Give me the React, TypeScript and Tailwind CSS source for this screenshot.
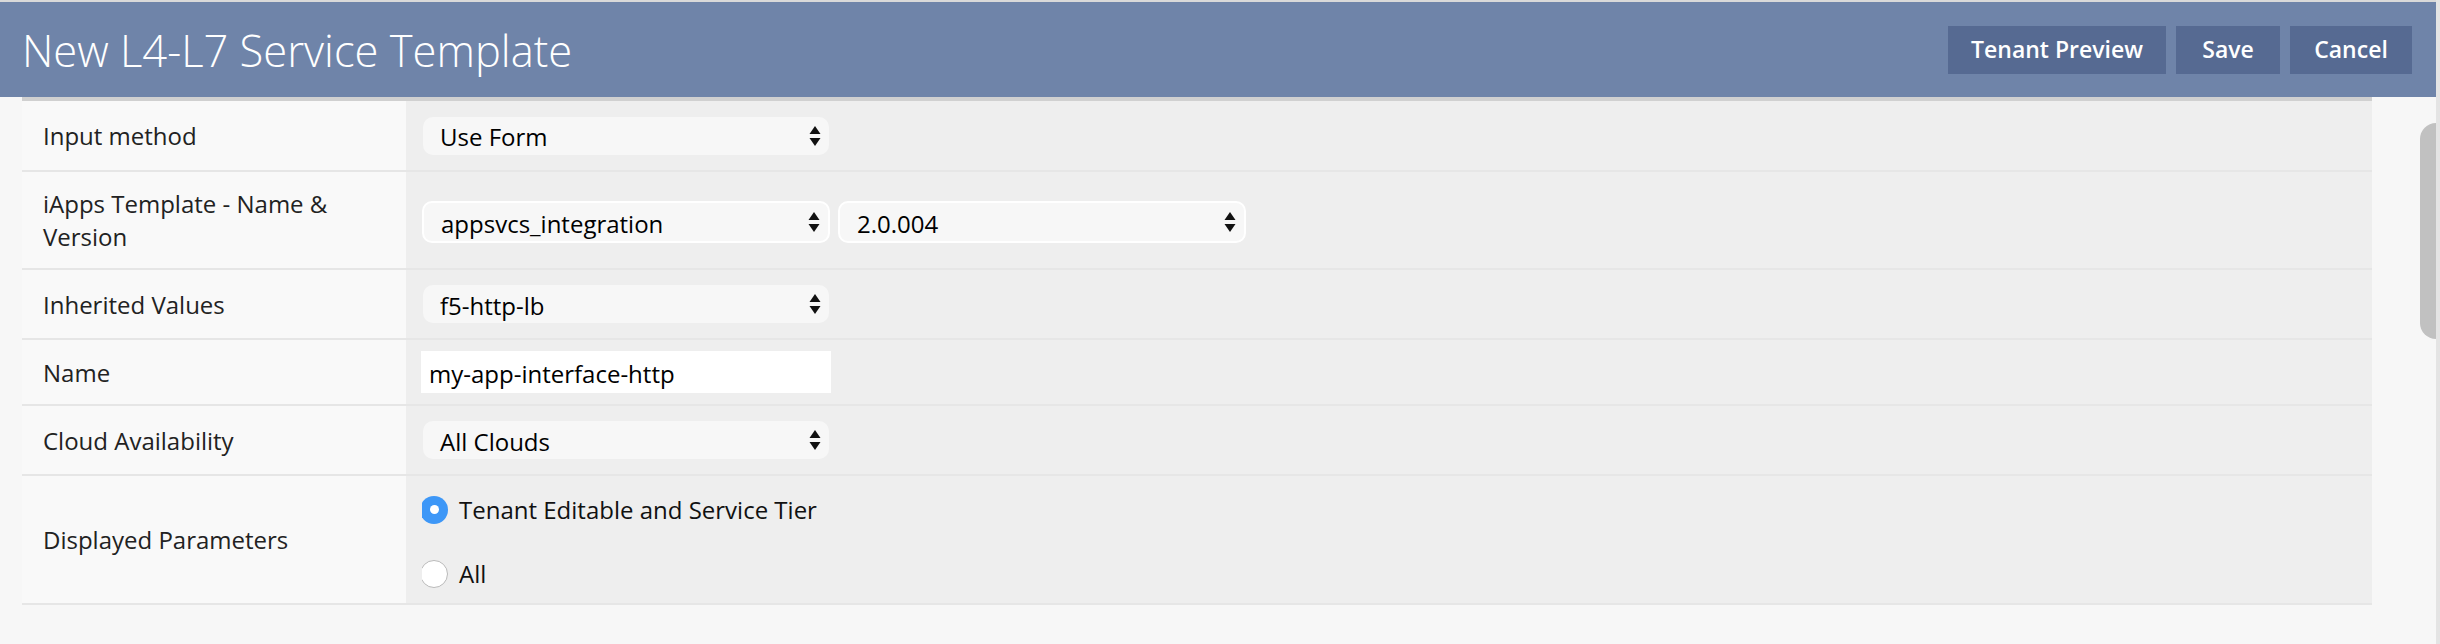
function Arrows() {
  return (
    <svg width="12" height="20" viewBox="0 0 12 20" className="shrink-0">
      <polygon points="6,0 11.5,8 0.5,8" fill="#111" />
      <polygon points="0.5,12 11.5,12 6,20" fill="#111" />
    </svg>
  );
}

type SelectProps = { value: string; width: string; ring?: boolean };

function FakeSelect({ value, width, ring }: SelectProps) {
  return (
    <div
      className={`${width} flex items-center justify-between rounded-[10px] bg-[#f7f7f7] pl-[17px] pr-[8px] text-[24px] text-black ${
        ring ? "h-[42px] border-2 border-white" : "h-[38px]"
      }`}
    >
      <span className="pt-[3px] leading-none">{value}</span>
      <Arrows />
    </div>
  );
}

function Radio({ checked }: { checked?: boolean }) {
  return (
    <span className="flex h-[28px] w-[26px] shrink-0 items-center justify-end overflow-hidden">
      {checked ? (
        <span className="flex h-[28px] w-[28px] shrink-0 items-center justify-center rounded-full bg-[#3d97f7]">
          <span className="h-[9px] w-[9px] rounded-full bg-white" />
        </span>
      ) : (
        <span className="h-[28px] w-[28px] shrink-0 rounded-full border border-[#b9b9b9] bg-white" />
      )}
    </span>
  );
}

type RowProps = { label: string; height: string; children: React.ReactNode };

function Row({ label, height, children }: RowProps) {
  return (
    <div className={`flex ${height} border-b-2 border-[#e6e6e6]`}>
      <div className="flex w-[384px] shrink-0 items-center bg-[#f9f9f9] pl-[21px] pr-[30px] text-[24px] leading-[33px] text-[#222]">
        {label}
      </div>
      <div className="flex flex-1 items-center bg-[#eeeeee] pl-[17px]">{children}</div>
    </div>
  );
}

export default function App() {
  return (
    <div className="flex h-[644px] w-[2440px] overflow-hidden bg-[#f7f7f7] font-['Open_Sans',sans-serif]">
      <div className="flex flex-1 flex-col">
        <div className="h-[2px] bg-[#d9d9d9]" />
        <header className="flex h-[95px] items-center justify-between bg-[#6f84a9] pl-[22px] pr-[24px]">
          <h1 className="pt-[2px] text-[43.5px] font-light leading-none text-white">New L4-L7 Service Template</h1>
          <div className="flex gap-[10px]">
            <button className="flex h-[48px] w-[218px] items-center justify-center bg-[#566a92] text-[23px] font-semibold text-white">
              Tenant Preview
            </button>
            <button className="flex h-[48px] w-[104px] items-center justify-center bg-[#566a92] text-[23px] font-semibold text-white">
              Save
            </button>
            <button className="flex h-[48px] w-[122px] items-center justify-center bg-[#566a92] text-[23px] font-semibold text-white">
              Cancel
            </button>
          </div>
        </header>
        <div className="flex flex-1">
          <div className="w-[22px] shrink-0" />
          <div className="w-[2350px] shrink-0 self-start border-t-4 border-[#d0d0d0]">
            <Row label="Input method" height="h-[71px]">
              <FakeSelect value="Use Form" width="w-[406px]" />
            </Row>
            <Row label="iApps Template - Name & Version" height="h-[98px]">
              <div className="-ml-[1px] flex gap-[8px] pt-[4px]">
                <FakeSelect value="appsvcs_integration" width="w-[408px]" ring />
                <FakeSelect value="2.0.004" width="w-[408px]" ring />
              </div>
            </Row>
            <Row label="Inherited Values" height="h-[70px]">
              <FakeSelect value="f5-http-lb" width="w-[406px]" />
            </Row>
            <Row label="Name" height="h-[66px]">
              <div className="-ml-[2px] flex h-[42px] w-[410px] items-center bg-white pl-[8px] pt-[3px] text-[24px] text-black">
                my-app-interface-http
              </div>
            </Row>
            <Row label="Cloud Availability" height="h-[70px]">
              <FakeSelect value="All Clouds" width="w-[406px]" />
            </Row>
            <Row label="Displayed Parameters" height="h-[129px]">
              <div className="-ml-[1px] flex flex-col gap-[36px] pt-[4px] text-[24px] text-[#111]">
                <label className="flex h-[28px] items-center gap-[11px]">
                  <Radio checked />
                  <span>Tenant Editable and Service Tier</span>
                </label>
                <label className="flex h-[28px] items-center gap-[11px]">
                  <Radio />
                  <span>All</span>
                </label>
              </div>
            </Row>
          </div>
          <div className="flex flex-1 justify-end pt-[26px]">
            <div className="h-[216px] w-[16px] rounded-l-full bg-[#c1c1c1]" />
          </div>
        </div>
      </div>
      <div className="w-[4px] shrink-0 bg-[#e4e4e4]" />
    </div>
  );
}
